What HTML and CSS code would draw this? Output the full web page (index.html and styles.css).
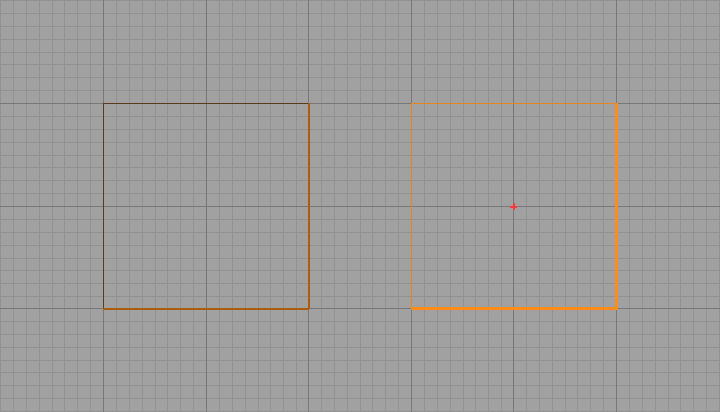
FILE: index.html
```html
<!DOCTYPE html>
<html>
<head>
<meta charset="utf-8">
<link rel="stylesheet" href="styles.css">
</head>
<body>
<div class="viewport">
<svg class="canvas" width="720" height="412" viewBox="0 0 720 412" shape-rendering="crispEdges">
  <path class="minor" d="
    M0.5 0V412 M13.5 0V412 M26.5 0V412 M39.5 0V412 M52.5 0V412 M64.5 0V412 M77.5 0V412 M90.5 0V412
    M116.5 0V412 M129.5 0V412 M142.5 0V412 M155.5 0V412 M167.5 0V412 M180.5 0V412 M193.5 0V412
    M219.5 0V412 M232.5 0V412 M245.5 0V412 M258.5 0V412 M270.5 0V412 M283.5 0V412 M296.5 0V412
    M321.5 0V412 M334.5 0V412 M347.5 0V412 M360.5 0V412 M372.5 0V412 M385.5 0V412 M398.5 0V412
    M424.5 0V412 M437.5 0V412 M450.5 0V412 M463.5 0V412 M475.5 0V412 M488.5 0V412 M501.5 0V412
    M526.5 0V412 M539.5 0V412 M552.5 0V412 M565.5 0V412 M577.5 0V412 M590.5 0V412 M603.5 0V412
    M629.5 0V412 M642.5 0V412 M655.5 0V412 M668.5 0V412 M680.5 0V412 M693.5 0V412 M706.5 0V412 M719.5 0V412
    M0 0.5H720 M0 13.5H720 M0 26.5H720 M0 39.5H720 M0 52.5H720 M0 64.5H720 M0 77.5H720 M0 90.5H720
    M0 116.5H720 M0 129.5H720 M0 142.5H720 M0 155.5H720 M0 167.5H720 M0 180.5H720 M0 193.5H720
    M0 219.5H720 M0 232.5H720 M0 245.5H720 M0 258.5H720 M0 270.5H720 M0 283.5H720 M0 296.5H720
    M0 321.5H720 M0 334.5H720 M0 347.5H720 M0 360.5H720 M0 372.5H720 M0 385.5H720 M0 398.5H720 M0 411.5H720"/>
  <path class="major" d="
    M103.5 0V412 M206.5 0V412 M308.5 0V412 M411.5 0V412 M513.5 0V412 M616.5 0V412
    M0 103.5H720 M0 206.5H720 M0 308.5H720"/>
  <path class="box-dark" d="M103.5 308V103.5H308"/>
  <path class="box-mid" d="M308.5 103V309 M103 308.5H309"/>
  <path class="box-light" d="M411.5 308V103.5H616"/>
  <path class="box-hot" d="M616.5 103V310 M411 308.5H618"/>
  <path class="cursor" d="M510 206.5H517 M513.5 203V210"/>
</svg>
</div>
</body>
</html>
```
FILE: styles.css
```css
html, body {
  margin: 0;
  padding: 0;
  background: #a1a1a1;
  overflow: hidden;
}
.viewport {
  width: 720px;
  height: 412px;
  background: #a1a1a1;
}
.canvas {
  display: block;
}
.minor {
  stroke: #929292;
  stroke-width: 1;
  fill: none;
}
.major {
  stroke: #787878;
  stroke-width: 1;
  fill: none;
}
.box-dark {
  stroke: #5a3a18;
  stroke-width: 1;
  fill: none;
}
.box-mid {
  stroke: #a85e0c;
  stroke-width: 2;
  fill: none;
}
.box-light {
  stroke: #e8861e;
  stroke-width: 1;
  fill: none;
}
.box-hot {
  stroke: #ff8c1a;
  stroke-width: 3;
  fill: none;
}
.cursor {
  stroke: #ff3a3a;
  stroke-width: 2;
  fill: none;
}
```
